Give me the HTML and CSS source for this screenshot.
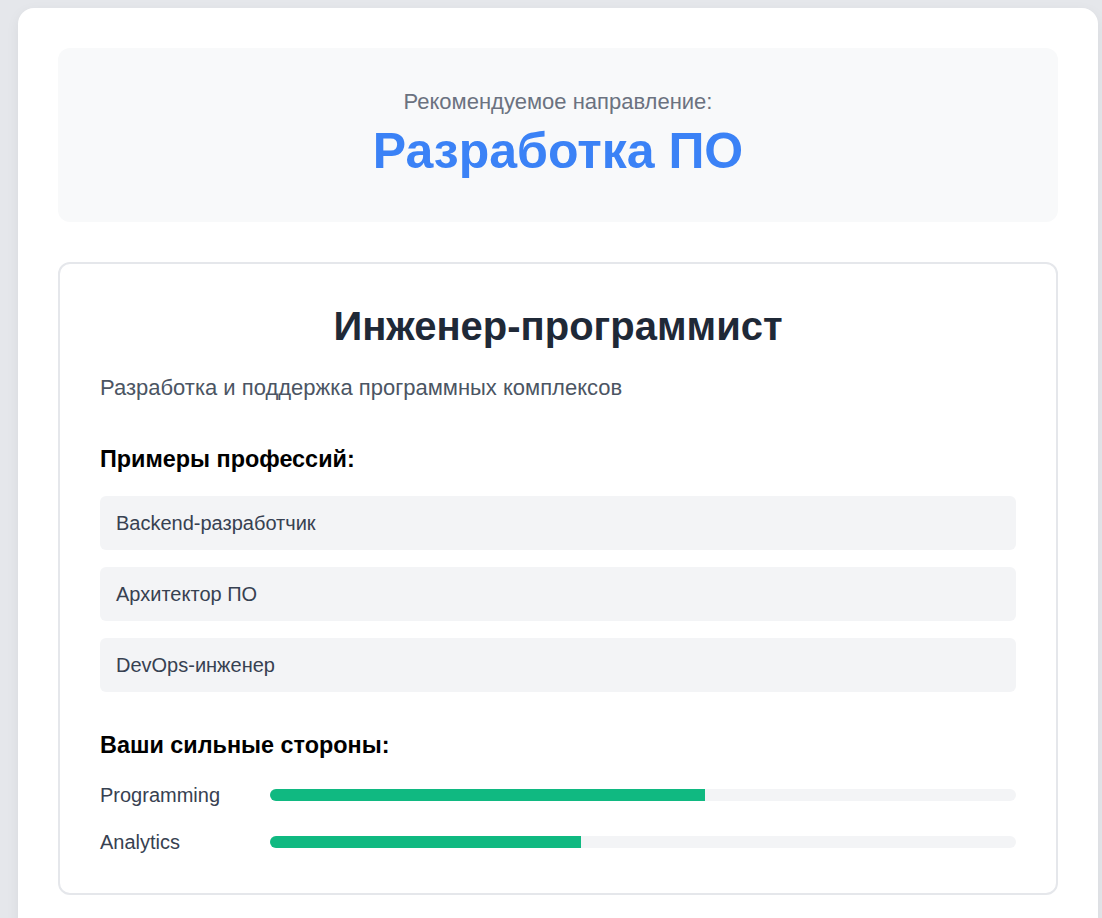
FILE: index.html
```html
<!DOCTYPE html>
<html lang="ru">
<head>
<meta charset="utf-8">
<title>Результат</title>
<link rel="stylesheet" href="styles.css">
</head>
<body>
<div class="page">
  <div class="card">
    <section class="hero">
      <p class="hero-sub">Рекомендуемое направление:</p>
      <h1 class="hero-title">Разработка ПО</h1>
    </section>
    <section class="detail">
      <h2 class="detail-title">Инженер-программист</h2>
      <p class="detail-desc">Разработка и поддержка программных комплексов</p>
      <h3 class="section-heading">Примеры профессий:</h3>
      <ul class="prof-list">
        <li class="prof-item">Backend-разработчик</li>
        <li class="prof-item">Архитектор ПО</li>
        <li class="prof-item">DevOps-инженер</li>
      </ul>
      <h3 class="section-heading strengths-heading">Ваши сильные стороны:</h3>
      <div class="strengths">
        <div class="strength-row">
          <span class="strength-label">Programming</span>
          <div class="track"><div class="fill" style="width:58.33%"></div></div>
        </div>
        <div class="strength-row">
          <span class="strength-label">Analytics</span>
          <div class="track"><div class="fill" style="width:41.67%"></div></div>
        </div>
      </div>
    </section>
  </div>
</div>
</body>
</html>
```

FILE: styles.css
```css
* { box-sizing: border-box; }
html, body { margin: 0; padding: 0; }
body {
  background: #e5e7eb;
  font-family: "Liberation Sans", Arial, sans-serif;
  color: #374151;
}
.page {
  padding: 8px 0 0 18px;
}
.card {
  width: 1080px;
  background: #ffffff;
  border-radius: 16px;
  padding: 40px;
  box-shadow: 0 4px 14px rgba(0, 0, 0, 0.06);
}
.hero {
  background: #f8f9fa;
  border-radius: 12px;
  padding: 37px 20px 42px;
  text-align: center;
}
.hero-sub {
  margin: 0;
  font-size: 22px;
  line-height: 33px;
  color: #6b7280;
}
.hero-title {
  margin: 4px 0 0;
  font-size: 50px;
  line-height: 58px;
  font-weight: 700;
  color: #3b82f6;
}
.detail {
  margin-top: 40px;
  border: 2px solid #e5e7eb;
  border-radius: 12px;
  padding: 38px 40px 39px;
}
.detail-title {
  margin: 0;
  text-align: center;
  font-size: 40px;
  line-height: 48px;
  font-weight: 700;
  color: #1f2937;
}
.detail-desc {
  margin: 21px 0 0;
  font-size: 22px;
  line-height: 33px;
  color: #4b5563;
}
.section-heading {
  margin: 41px 0 0;
  font-size: 23.4px;
  line-height: 28px;
  font-weight: 700;
  color: #000000;
}
.prof-list {
  list-style: none;
  margin: 23px 0 0;
  padding: 0;
  display: flex;
  flex-direction: column;
  gap: 17px;
}
.prof-item {
  background: #f3f4f6;
  border-radius: 6px;
  padding: 15px 16px;
  font-size: 20px;
  line-height: 24px;
  color: #374151;
}
.strengths-heading {
  margin-top: 39px;
}
.strengths {
  margin-top: 24px;
  display: flex;
  flex-direction: column;
  gap: 23px;
}
.strength-row {
  display: flex;
  align-items: center;
}
.strength-label {
  width: 170px;
  flex: none;
  font-size: 20px;
  line-height: 24px;
  color: #374151;
}
.track {
  flex: 1;
  height: 12px;
  background: #f3f4f6;
  border-radius: 6px;
  overflow: hidden;
}
.fill {
  height: 100%;
  background: #10b981;
}
```
